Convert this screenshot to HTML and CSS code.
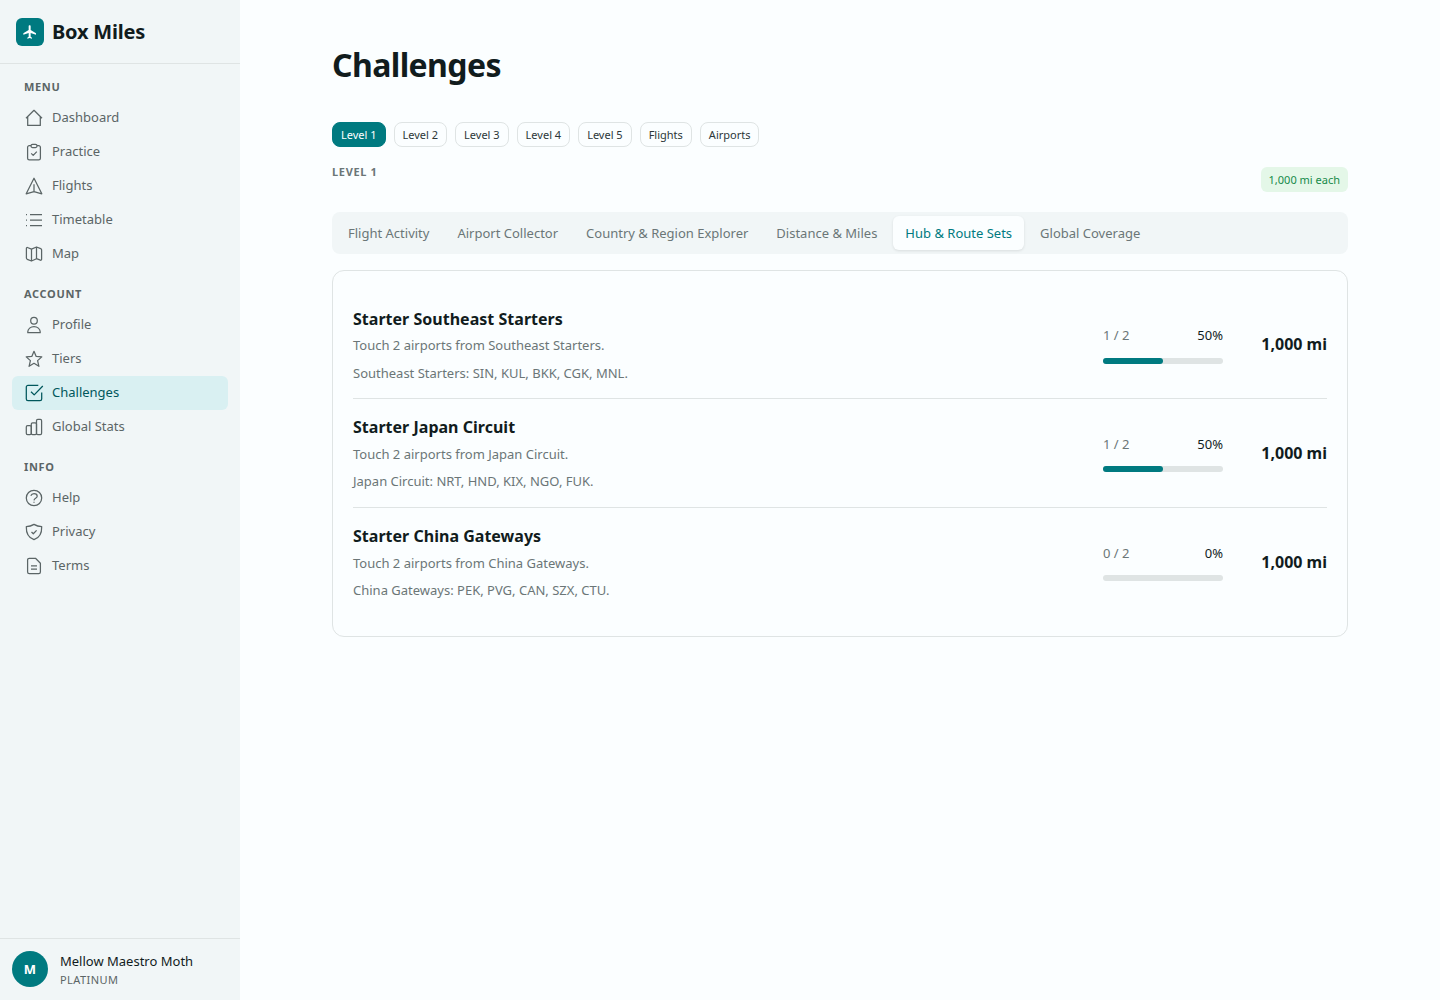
FILE: index.html
```html
<!DOCTYPE html>
<html lang="en">
<head>
    <meta charset="UTF-8">
    <meta name="viewport" content="width=device-width, initial-scale=1.0">
    <title>Challenges - Box Miles</title>
    <link rel="stylesheet" href="styles.css">
</head>
<body>
    <aside class="sidebar">
        <div class="brand">
            <span class="brand-logo">
                <svg width="16" height="16" viewBox="0 0 24 24"><path fill="currentColor" d="M21 16v-2l-8-5V3.5c0-.83-.67-1.5-1.5-1.5S10 2.67 10 3.5V9l-8 5v2l8-2.5V19l-2 1.5V22l3.5-1 3.5 1v-1.5L13 19v-5.5l8 2.5z"/></svg>
            </span>
            <span class="brand-name">Box Miles</span>
        </div>

        <nav class="nav">
            <div class="nav-label">Menu</div>
            <a class="nav-item" href="#">
                <svg class="icon" viewBox="0 0 20 20"><path d="M2 10.2 10 2.3l8 7.9M3.7 8.6v8.8h12.6V8.6"/></svg>
                Dashboard
            </a>
            <a class="nav-item" href="#">
                <svg class="icon" viewBox="0 0 20 20"><path d="M7 3.6H5.3A1.7 1.7 0 0 0 3.6 5.3v10.9a1.7 1.7 0 0 0 1.7 1.7h9.4a1.7 1.7 0 0 0 1.7-1.7V5.3a1.7 1.7 0 0 0-1.7-1.7H13"/><rect x="7" y="2.3" width="6" height="3.2" rx="1.5"/><path d="m7.2 11.4 2 2 3.6-3.8"/></svg>
                Practice
            </a>
            <a class="nav-item" href="#">
                <svg class="icon" viewBox="0 0 20 20"><path d="m10 2.2 7.8 15.6-7.8-2.1-7.8 2.1zM10 8.3v7.4"/></svg>
                Flights
            </a>
            <a class="nav-item" href="#">
                <svg class="icon" viewBox="0 0 20 20"><path d="M6 4.7h12M6 10.1h12M6 15.5h12M2 4.7h1M2 10.1h1M2 15.5h1"/></svg>
                Timetable
            </a>
            <a class="nav-item" href="#">
                <svg class="icon" viewBox="0 0 20 20"><path d="M3.4 3.5 7.5 5.1l5-2.1 4.2 1.6c.6.2.9.6.9 1.2v9.5c0 .7-.6 1.1-1.2.9l-3.9-1.5-5 2.3-4.2-1.7c-.6-.2-.9-.6-.9-1.2V4.4c0-.7.5-1.1 1-.9zM7.5 5.1V17M12.5 3v11.7"/></svg>
                Map
            </a>

            <div class="nav-label">Account</div>
            <a class="nav-item" href="#">
                <svg class="icon" viewBox="0 0 20 20"><circle cx="10" cy="5.7" r="3.3"/><path d="M3.8 17.7v-.9a6.2 5.2 0 0 1 12.4 0v.9z"/></svg>
                Profile
            </a>
            <a class="nav-item" href="#">
                <svg class="icon" viewBox="0 0 20 20"><path d="m10 2.3 2.2 5.1 5.6.5-4.2 3.7 1.3 5.7L10 14.3l-4.9 3 1.3-5.7-4.2-3.7 5.6-.5z"/></svg>
                Tiers
            </a>
            <a class="nav-item active" href="#">
                <svg class="icon" viewBox="0 0 20 20"><path d="M14.3 2.4H4a1.7 1.7 0 0 0-1.7 1.7V16A1.7 1.7 0 0 0 4 17.7h12a1.7 1.7 0 0 0 1.7-1.7V9.5M7 8.7l3.2 3.2L18.8 3"/></svg>
                Challenges
            </a>
            <a class="nav-item" href="#">
                <svg class="icon" viewBox="0 0 20 20"><rect x="2.3" y="8.6" width="5" height="9" rx="1.3"/><rect x="7.3" y="5.8" width="5.2" height="11.8" rx="1.3"/><rect x="12.5" y="2.4" width="5.1" height="15.2" rx="1.3"/></svg>
                Global Stats
            </a>

            <div class="nav-label">Info</div>
            <a class="nav-item" href="#">
                <svg class="icon" viewBox="0 0 20 20"><circle cx="10" cy="10" r="7.7"/><path d="M6.8 7.8C7.3 6.4 8.5 5.6 10 5.6c1.8 0 3.2 1 3.2 2.6 0 2.1-3 2.1-3.2 4.2M10 13.7v1"/></svg>
                Help
            </a>
            <a class="nav-item" href="#">
                <svg class="icon" viewBox="0 0 20 20"><path d="M10 2.4c2.4 1.5 4.9 2.2 7.7 2.3.2 6.4-1.6 10.8-7.7 13-6.1-2.2-7.9-6.6-7.7-13 2.8-.1 5.3-.8 7.7-2.3z"/><path d="m7.5 10 1.8 1.8 3.3-3.4"/></svg>
                Privacy
            </a>
            <a class="nav-item" href="#">
                <svg class="icon" viewBox="0 0 20 20"><path d="M11.5 2.3H5.3A1.7 1.7 0 0 0 3.6 4v12a1.7 1.7 0 0 0 1.7 1.7h9.4a1.7 1.7 0 0 0 1.7-1.7V7.2zM7 9.9h6M7 13.2h6"/></svg>
                Terms
            </a>
        </nav>

        <div class="user">
            <div class="avatar">M</div>
            <div class="user-info">
                <div class="user-name">Mellow Maestro Moth</div>
                <div class="user-tier">PLATINUM</div>
            </div>
        </div>
    </aside>

    <main class="main">
        <div class="container">
            <h1>Challenges</h1>

            <div class="pills">
                <a class="pill active" href="#">Level 1</a>
                <a class="pill" href="#">Level 2</a>
                <a class="pill" href="#">Level 3</a>
                <a class="pill" href="#">Level 4</a>
                <a class="pill" href="#">Level 5</a>
                <a class="pill" href="#">Flights</a>
                <a class="pill" href="#">Airports</a>
            </div>

            <div class="level-header">
                <h2>Level 1</h2>
                <span class="badge">1,000 mi each</span>
            </div>

            <div class="tabs">
                <button class="tab">Flight Activity</button>
                <button class="tab">Airport Collector</button>
                <button class="tab">Country &amp; Region Explorer</button>
                <button class="tab">Distance &amp; Miles</button>
                <button class="tab active">Hub &amp; Route Sets</button>
                <button class="tab">Global Coverage</button>
            </div>

            <div class="card">
                <div class="challenge">
                    <div class="challenge-info">
                        <h3>Starter Southeast Starters</h3>
                        <p>Touch 2 airports from Southeast Starters.</p>
                        <p>Southeast Starters: SIN, KUL, BKK, CGK, MNL.</p>
                    </div>
                    <div class="progress">
                        <div class="progress-text"><span>1 / 2</span><span class="percent">50%</span></div>
                        <div class="bar"><div class="bar-fill" style="width: 50%"></div></div>
                    </div>
                    <div class="reward">1,000 mi</div>
                </div>
                <div class="challenge">
                    <div class="challenge-info">
                        <h3>Starter Japan Circuit</h3>
                        <p>Touch 2 airports from Japan Circuit.</p>
                        <p>Japan Circuit: NRT, HND, KIX, NGO, FUK.</p>
                    </div>
                    <div class="progress">
                        <div class="progress-text"><span>1 / 2</span><span class="percent">50%</span></div>
                        <div class="bar"><div class="bar-fill" style="width: 50%"></div></div>
                    </div>
                    <div class="reward">1,000 mi</div>
                </div>
                <div class="challenge">
                    <div class="challenge-info">
                        <h3>Starter China Gateways</h3>
                        <p>Touch 2 airports from China Gateways.</p>
                        <p>China Gateways: PEK, PVG, CAN, SZX, CTU.</p>
                    </div>
                    <div class="progress">
                        <div class="progress-text"><span>0 / 2</span><span class="percent">0%</span></div>
                        <div class="bar"><div class="bar-fill" style="width: 0%"></div></div>
                    </div>
                    <div class="reward">1,000 mi</div>
                </div>
            </div>
        </div>
    </main>
</body>
</html>
```

FILE: styles.css
```css
* {
    box-sizing: border-box;
}
body {
    margin: 0;
    display: flex;
    min-height: 100vh;
    background: #fbfeff;
    color: #111c1d;
    font-family: "Noto Sans", sans-serif;
    font-size: 13px;
    line-height: 1.6;
}
h1, h2, h3, p {
    margin: 0;
}
a {
    color: inherit;
    text-decoration: none;
}

/* Sidebar */
.sidebar {
    width: 240px;
    height: 100vh;
    display: flex;
    flex-direction: column;
    background: #f1f6f7;
}
.brand {
    height: 64px;
    padding: 0 16px;
    display: flex;
    align-items: center;
    gap: 8px;
    border-bottom: 1px solid #dfe4e4;
}
.brand-logo {
    width: 28px;
    height: 28px;
    display: flex;
    align-items: center;
    justify-content: center;
    border-radius: 6px;
    background: #007a80;
    color: #fff;
}
.brand-name {
    font-size: 20px;
    font-weight: 700;
    letter-spacing: -0.2px;
}
.nav {
    flex: 1;
    padding: 0 12px;
}
.nav-label {
    height: 37px;
    padding: 15px 12px 0;
    font-size: 11px;
    line-height: 16px;
    font-weight: 700;
    letter-spacing: 0.66px;
    text-transform: uppercase;
    color: #5b6566;
}
.nav-item {
    height: 34px;
    padding: 0 12px 1.5px;
    display: flex;
    align-items: center;
    gap: 8px;
    border-radius: 6px;
    color: #5b6566;
}
.nav-item.active {
    background: #d9f0f2;
    color: #00575c;
}
.icon {
    width: 20px;
    height: 20px;
    margin-top: 1.5px;
    fill: none;
    stroke: currentColor;
    stroke-width: 1.25;
    stroke-linejoin: round;
}

/* User box */
.user {
    height: 62px;
    padding: 12px 12px 13px;
    display: flex;
    align-items: center;
    gap: 12px;
    border-top: 1px solid #dfe4e4;
}
.avatar {
    width: 36px;
    height: 36px;
    display: flex;
    align-items: center;
    justify-content: center;
    border-radius: 50%;
    background: #007a80;
    color: #fff;
    font-weight: 700;
}
.user-name {
    line-height: 22px;
}
.user-tier {
    font-size: 11px;
    line-height: 16px;
    letter-spacing: 0.44px;
    color: #5b6566;
}

/* Content */
.main {
    flex: 1;
}
.container {
    width: 1016px;
    margin: 0 auto;
    padding-top: 40px;
}
h1 {
    font-size: 32px;
    line-height: 50px;
    font-weight: 700;
    letter-spacing: -0.6px;
    margin-bottom: 32px;
}
.pills {
    display: flex;
    gap: 8px;
    margin-bottom: 20px;
}
.pill {
    height: 25px;
    padding: 0 8px;
    border: 1px solid #dfe4e4;
    border-radius: 8px;
    font-size: 11px;
    line-height: 24px;
    color: #2c3738;
}
.pill.active {
    background: #007a80;
    border-color: #007a80;
    color: #fff;
}
.level-header {
    display: flex;
    justify-content: space-between;
    margin-bottom: 20px;
}
h2 {
    font-size: 11px;
    line-height: 9px;
    font-weight: 700;
    letter-spacing: 0.66px;
    text-transform: uppercase;
    color: #6b7677;
}
.badge {
    height: 25px;
    padding: 0 8px;
    border-radius: 6px;
    background: #e4f7e8;
    color: #158a4a;
    font-size: 11px;
    line-height: 25px;
}

/* Tabs */
.tabs {
    display: flex;
    gap: 4px;
    padding: 4px;
    margin-bottom: 16px;
    border-radius: 8px;
    background: #f1f6f7;
}
.tab {
    height: 33.6px;
    padding: 1px 12px 0;
    border: 0;
    border-radius: 6px;
    background: none;
    color: #6b7677;
    font: inherit;
}
.tab.active {
    background: #fbfeff;
    color: #007a80;
    box-shadow: 0 1px 3px rgba(0, 0, 0, 0.1);
}

/* Challenge list */
.card {
    padding: 20px;
    border: 1px solid #dfe4e4;
    border-radius: 12px;
}
.challenge {
    display: flex;
    align-items: center;
    padding: 16px 0 15px;
    border-bottom: 1px solid #dfe4e4;
}
.challenge:last-child {
    border-bottom: 0;
}
.challenge-info {
    flex: 1;
}
h3 {
    font-size: 16px;
    line-height: 24px;
    font-weight: 700;
    letter-spacing: 0.02px;
}
.challenge-info p {
    margin-top: 4.4px;
    color: #6b7677;
}
.challenge-info p + p {
    margin-top: 6.8px;
}
.progress {
    width: 120px;
}
.progress-text {
    display: flex;
    justify-content: space-between;
    margin-bottom: 12.8px;
    line-height: 18.4px;
    color: #6b7677;
}
.percent {
    color: #111c1d;
}
.bar {
    height: 6px;
    border-radius: 3px;
    background: #dfe4e4;
}
.bar-fill {
    height: 100%;
    border-radius: 3px;
    background: #007a80;
}
.reward {
    width: 104px;
    text-align: right;
    font-size: 16px;
    font-weight: 700;
}
```
